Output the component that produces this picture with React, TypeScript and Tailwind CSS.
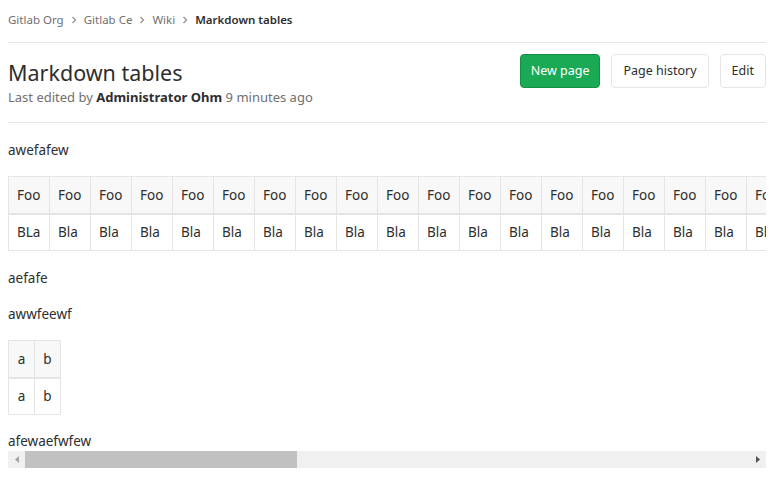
import React from "react";

const cols = Array.from({ length: 49 }, (_, i) => i);

function Chevron() {
  return (
    <svg width="8" height="8" viewBox="0 0 8 8" className="mx-[6px] text-[#8f8f8f]">
      <path d="M2.5 1 L5.5 4 L2.5 7" fill="none" stroke="currentColor" strokeWidth="1.2" />
    </svg>
  );
}

export default function App() {
  return (
    <div
      className="w-[777px] h-[496px] bg-white text-[#2e2e2e] overflow-hidden"
      style={{ fontFamily: '"Noto Sans", "Open Sans", sans-serif' }}
    >
      <div className="w-[758px] ml-[8px]">
        {/* breadcrumb */}
        <div className="h-[43px] flex items-center text-[11.5px] border-b border-[#e5e5e5] pb-[2px]">
          <span className="text-[#707070]">Gitlab Org</span>
          <Chevron />
          <span className="text-[#707070]">Gitlab Ce</span>
          <Chevron />
          <span className="text-[#707070]">Wiki</span>
          <Chevron />
          <span className="font-semibold text-[#2e2e2e]">Markdown tables</span>
        </div>

        {/* header */}
        <div className="h-[80px] flex justify-between border-b border-[#e5e5e5]">
          <div className="pt-[15px]">
            <h1 className="text-[21.5px] leading-[30px] text-[#2e2e2e]">Markdown tables</h1>
            <div className="text-[13px] leading-[20px] text-[#707070] -mt-[1px]">
              Last edited by <span className="font-bold text-[#2e2e2e]">Administrator Ohm</span> 9 minutes ago
            </div>
          </div>
          <div className="flex gap-[11px] pt-[11px]">
            <button className="h-[34px] px-[10px] rounded-[4px] bg-[#1aaa55] border border-[#168f48] text-white text-[12.5px]">
              New page
            </button>
            <button className="h-[34px] px-[11px] rounded-[4px] bg-white border border-[#e5e5e5] text-[#2e2e2e] text-[12.5px]">
              Page history
            </button>
            <button className="h-[34px] px-[11px] rounded-[4px] bg-white border border-[#e5e5e5] text-[#2e2e2e] text-[12.5px]">
              Edit
            </button>
          </div>
        </div>

        {/* wiki content */}
        <div className="text-[13.5px] text-[#2e2e2e]">
          <div className="overflow-hidden">
            <p className="mt-[17px] leading-[20px]">awefafew</p>
            <table className="mt-[16px] border-collapse">
              <thead>
                <tr>
                  {cols.map((i) => (
                    <th
                      key={i}
                      className="font-normal h-[37px] min-w-[41px] px-[8px] border border-[#e5e5e5] border-b-2 bg-[#f8f8f8] text-left"
                    >
                      Foo
                    </th>
                  ))}
                </tr>
              </thead>
              <tbody>
                <tr>
                  {cols.map((i) => (
                    <td
                      key={i}
                      className="h-[37px] min-w-[41px] px-[8px] border border-[#e5e5e5] text-left"
                    >
                      {i === 0 ? "BLa" : "Bla"}
                    </td>
                  ))}
                </tr>
              </tbody>
            </table>
            <p className="mt-[17px] leading-[20px]">aefafe</p>
            <p className="mt-[16px] leading-[20px]">awwfeewf</p>
            <table className="mt-[16px] border-collapse">
              <thead>
                <tr>
                  <th className="font-normal h-[37px] w-[26px] border border-[#e5e5e5] border-b-2 bg-[#f8f8f8] text-center">a</th>
                  <th className="font-normal h-[37px] w-[26px] border border-[#e5e5e5] border-b-2 bg-[#f8f8f8] text-center">b</th>
                </tr>
              </thead>
              <tbody>
                <tr>
                  <td className="h-[37px] w-[26px] border border-[#e5e5e5] text-center">a</td>
                  <td className="h-[37px] w-[26px] border border-[#e5e5e5] text-center">b</td>
                </tr>
              </tbody>
            </table>
            <p className="mt-[16px] leading-[20px]">afewaefwfew</p>
          </div>
          {/* horizontal scrollbar */}
          <div className="h-[17px] flex bg-[#f0f0f0]">
            <div className="w-[17px] flex items-center justify-center">
              <svg width="4" height="7" viewBox="0 0 4 7">
                <path d="M4 0 L0 3.5 L4 7 Z" fill="#a3a3a3" />
              </svg>
            </div>
            <div className="flex-1 flex items-stretch">
              <div className="w-[272px] bg-[#c1c1c1]" />
            </div>
            <div className="w-[17px] flex items-center justify-center">
              <svg width="4" height="7" viewBox="0 0 4 7">
                <path d="M0 0 L4 3.5 L0 7 Z" fill="#505050" />
              </svg>
            </div>
          </div>
        </div>
      </div>
    </div>
  );
}
